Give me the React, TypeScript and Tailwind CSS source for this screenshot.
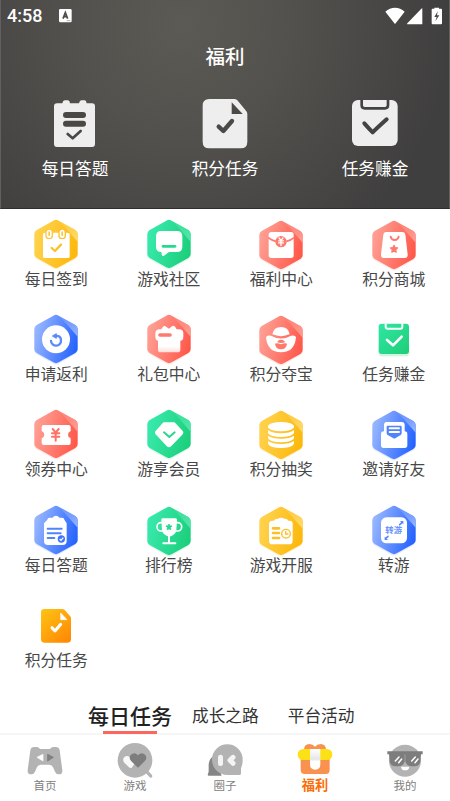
import React from "react";

type Tone = "yellow" | "green" | "red" | "blue";

interface Entry {
  label: string;
  icon: React.ReactElement;
}

const tones: Record<Tone, { from: string; to: string; facet: string }> = {
  yellow: { from: "#ffd350", to: "#fcb80c", facet: "#ffdc72" },
  green: { from: "#3aeaae", to: "#1ccf7b", facet: "#57e9ae" },
  red: { from: "#ffa196", to: "#ff584a", facet: "#ffa299" },
  blue: { from: "#9ab8ff", to: "#2563ff", facet: "#9ab8ff" },
};

const HEX =
  "M64 5Q72 0 80 5L130 33Q137 37 137 45V106Q137 113 130 117L80 145Q72 150 64 145L14 117Q7 113 7 106V45Q7 37 14 33Z";

const Hexagon = ({
  tone,
  low = false,
  children,
}: {
  tone: Tone;
  low?: boolean;
  children: React.ReactNode;
}) => {
  const { from, to, facet } = tones[tone];
  return (
    <svg viewBox="0 0 144 156" className="h-[52px] w-12" fill="none">
      <defs>
        <linearGradient id={`hex-${tone}`} x1="0" y1="0.3" x2="1" y2="0.6">
          <stop offset="0" stopColor={from} />
          <stop offset="1" stopColor={to} />
        </linearGradient>
        <linearGradient id={`facet-${tone}`} x1="0" y1="0" x2="1" y2="1">
          <stop offset="0" stopColor={facet} stopOpacity="0.2" />
          <stop offset="1" stopColor={facet} />
        </linearGradient>
      </defs>
      <g transform={low ? "translate(0 3)" : undefined}>
        <path d={HEX} fill={to} opacity="0.12" transform="translate(0 4)" />
        <path d={HEX} fill={`url(#hex-${tone})`} />
        <path
          d="M83 7L130 33Q137 37 137 45V68Z"
          fill={`url(#facet-${tone})`}
        />
      </g>
      {children}
    </svg>
  );
};

const Yen = ({ x, y, s }: { x: number; y: number; s: number }) => (
  <path
    transform={`translate(${x} ${y}) scale(${s})`}
    d="M-9 -17L0 -6L9 -17M0 -6V18M-11 -4H11M-11 6H11"
    strokeWidth="6"
    strokeLinecap="round"
    strokeLinejoin="round"
  />
);

const Star = ({ x, y, s, fill }: { x: number; y: number; s: number; fill: string }) => (
  <path
    transform={`translate(${x} ${y}) scale(${s})`}
    d="M0 -10L3 -4L10 -3L5 2L6 9L0 6L-6 9L-5 2L-10 -3L-3 -4Z"
    fill={fill}
    stroke={fill}
    strokeWidth="3"
    strokeLinejoin="round"
  />
);

const entries: Entry[] = [
  {
    label: "每日签到",
    icon: (
      <Hexagon tone="yellow">
        <path
          d="M38 41H106Q113 41 113 46V113Q113 117 109 117H37Q33 117 33 113V46Q33 41 38 41Z"
          fill="#fff"
        />
        <rect x="40" y="30" width="23" height="30" rx="10" fill="#fdc63a" />
        <rect x="79" y="30" width="23" height="30" rx="10" fill="#fcc02a" />
        <rect x="44" y="32" width="15" height="25" rx="7.5" fill="#fff" />
        <rect x="83" y="32" width="15" height="25" rx="7.5" fill="#fff" />
        <path
          d="M51.500 39V49M90.500 39V49"
          stroke="#fdc63a"
          strokeWidth="5"
          strokeLinecap="round"
        />
        <path
          d="M59 87L69 96L87 77"
          stroke="#fcc02a"
          strokeWidth="7"
          strokeLinecap="round"
          strokeLinejoin="round"
        />
      </Hexagon>
    ),
  },
  {
    label: "游戏社区",
    icon: (
      <Hexagon tone="green">
        <path
          d="M48 36H96Q112 36 112 52V84Q112 99 96 99H72L57 110Q51 113 50 106L49 99Q33 99 33 84V52Q33 36 48 36Z"
          fill="#fff"
        />
        <path d="M54 82H90" stroke="#26d98e" strokeWidth="8" strokeLinecap="round" />
      </Hexagon>
    ),
  },
  {
    label: "福利中心",
    icon: (
      <Hexagon tone="red" low>
        <rect x="35" y="39" width="75" height="78" rx="8" fill="#fff" />
        <path d="M34 56Q44 65 57 67M111 56Q101 65 88 67" stroke="#ff7a6e" strokeWidth="5" />
        <circle cx="72" cy="68" r="17" fill="#ff7a6e" />
        <g stroke="#fff">
          <Yen x={72} y={68} s={0.65} />
        </g>
      </Hexagon>
    ),
  },
  {
    label: "积分商城",
    icon: (
      <Hexagon tone="red" low>
        <path
          d="M49 39H97Q105 39 106 47L113 106Q114 117 103 117H43Q32 117 33 106L40 47Q41 39 49 39Z"
          fill="#fff"
        />
        <path
          d="M62 53Q64 63 74 63Q84 63 86 53"
          stroke="#ff7a6e"
          strokeWidth="6"
          strokeLinecap="round"
        />
        <Star x={72} y={90} s={1.1} fill="#ff7a6e" />
      </Hexagon>
    ),
  },
  {
    label: "申请返利",
    icon: (
      <Hexagon tone="blue">
        <circle cx="72" cy="76" r="42" fill="#fff" />
        <path
          d="M70 66Q87 64 87 79A15 15 0 0 1 57 81"
          stroke="#5b8bfb"
          strokeWidth="7"
          strokeLinecap="round"
        />
        <path
          d="M61 66L73 59V73Z"
          fill="#5b8bfb"
          stroke="#5b8bfb"
          strokeWidth="3"
          strokeLinejoin="round"
        />
      </Hexagon>
    ),
  },
  {
    label: "礼包中心",
    icon: (
      <Hexagon tone="red">
        <defs>
          <linearGradient id="gift-body" x1="0" y1="0" x2="0" y2="1">
            <stop offset="0.6" stopColor="#fff" />
            <stop offset="1" stopColor="#ffdcd8" />
          </linearGradient>
        </defs>
        <path d="M39 70H106V107Q106 115 98 115H47Q39 115 39 107Z" fill="url(#gift-body)" />
        <path
          d="M45 46H49L54 38Q57 34 61 37L72 44L81 37Q87 33 90 38L95 46H102Q115 46 115 58V68Q115 80 106 80H39Q31 78 31 68V58Q31 46 45 46Z"
          fill="#fff"
        />
        <path d="M45 63H75" stroke="#ff7a6e" strokeWidth="11" strokeLinecap="round" />
      </Hexagon>
    ),
  },
  {
    label: "积分夺宝",
    icon: (
      <Hexagon tone="red" low>
        <path d="M46 61Q50 39 72 39Q94 39 98 61Q72 72 46 61Z" fill="#fff" />
        <path
          d="M27 70Q29 62 42 65Q72 82 102 65Q115 62 117 70Q113 115 72 115Q31 115 27 70Z"
          fill="#fff"
        />
        <path d="M61 85Q62 77 72 77Q82 77 84 85Q72 89 61 85Z" fill="#ff7a6e" />
        <path d="M54 89Q60 86 72 91Q84 86 90 89Q88 106 72 106Q56 106 54 89Z" fill="#ff7a6e" />
      </Hexagon>
    ),
  },
  {
    label: "任务赚金",
    icon: (
      <svg viewBox="0 0 144 156" className="h-[52px] w-12" fill="none">
        <defs>
          <linearGradient id="clip-green" x1="0" y1="0" x2="1" y2="1">
            <stop offset="0" stopColor="#2fe7a4" />
            <stop offset="1" stopColor="#1fcd76" />
          </linearGradient>
        </defs>
        <rect x="27" y="92" width="90" height="34" rx="10" fill="#1fcd76" opacity="0.15" />
        <rect x="24" y="94" width="96" height="36" rx="12" fill="#1fcd76" opacity="0.07" />
        <rect x="26" y="29" width="91" height="91" rx="9" fill="url(#clip-green)" />
        <path d="M47 28V38Q47 44 53 44H91Q97 44 97 38V28" stroke="#fff" strokeWidth="6" />
        <path
          d="M51 78L69 94L95 68"
          stroke="#fff"
          strokeWidth="8"
          strokeLinecap="round"
          strokeLinejoin="round"
        />
      </svg>
    ),
  },
  {
    label: "领券中心",
    icon: (
      <Hexagon tone="red">
        <path
          d="M35 48H110Q116 48 116 54V66Q108 69 108 77Q108 85 116 88V102Q116 108 110 108H35Q29 108 29 102V88Q37 85 37 77Q37 69 29 66V54Q29 48 35 48Z"
          fill="#fff"
        />
        <g stroke="#ff7166">
          <Yen x={71} y={77} s={1} />
        </g>
      </Hexagon>
    ),
  },
  {
    label: "游享会员",
    icon: (
      <Hexagon tone="green">
        <path
          d="M56 43H88L111 68Q113 71 111 74L77 109Q72 114 67 109L34 74Q32 71 34 68Z"
          fill="#fff"
          stroke="#fff"
          strokeWidth="6"
          strokeLinejoin="round"
        />
        <path
          d="M57 70L73 84L89 70"
          stroke="#26d98e"
          strokeWidth="6"
          strokeLinecap="round"
          strokeLinejoin="round"
        />
      </Hexagon>
    ),
  },
  {
    label: "积分抽奖",
    icon: (
      <Hexagon tone="yellow" low>
        <g fill="#fff">
          <ellipse cx="72" cy="53" rx="39" ry="14" />
          <path d="M33 63Q46 73 72 73Q98 73 111 63V72Q104 84 72 84Q40 84 33 72Z" />
          <path d="M33 80Q46 89 72 89Q98 89 111 80V88Q104 100 72 100Q40 100 33 88Z" />
          <path d="M33 96Q46 105 72 105Q98 105 111 96V104Q104 117 72 117Q40 117 33 104Z" />
        </g>
      </Hexagon>
    ),
  },
  {
    label: "邀请好友",
    icon: (
      <Hexagon tone="blue" low>
        <path
          d="M50 39H95Q104 39 104 48V67Q112 67 112 75V109Q112 117 104 117H41Q33 117 33 109V75Q33 67 42 67V48Q42 39 50 39Z"
          fill="#fff"
        />
        <path
          d="M53 50H92Q95 50 95 53V73Q95 76 92 78L77 87Q73 90 69 87L53 78Q50 76 50 73V53Q50 50 53 50Z"
          fill="#5183fb"
        />
        <path d="M59 58H87M59 69H87" stroke="#fff" strokeWidth="6" strokeLinecap="round" />
      </Hexagon>
    ),
  },
  {
    label: "每日答题",
    icon: (
      <Hexagon tone="blue">
        <path
          d="M46 44Q46 38 53 38H62Q65 32 72 32Q79 32 82 38H90Q97 38 97 44L104 55V108Q104 120 92 120H48Q36 120 36 108V55Z"
          fill="#fff"
        />
        <path
          d="M47 71H89M47 85H86M47 99H67"
          stroke="#5183fb"
          strokeWidth="6"
          strokeLinecap="round"
        />
        <circle cx="88" cy="102" r="11" fill="#4076fc" />
        <path d="M83 102L87 106L94 98" stroke="#fff" strokeWidth="3.500" />
      </Hexagon>
    ),
  },
  {
    label: "排行榜",
    icon: (
      <Hexagon tone="green" low>
        <rect x="36" y="53" width="74" height="25" rx="12" stroke="#fff" strokeWidth="5" />
        <path
          d="M53 40H92Q97 40 96 46L94 76Q91 91 73 95Q54 91 51 76L49 46Q48 40 53 40Z"
          fill="#fff"
        />
        <path d="M72 90V114M55 115H91" stroke="#fff" strokeWidth="6" strokeLinecap="round" />
        <Star x={72} y={66} s={0.9} fill="#26d98e" />
      </Hexagon>
    ),
  },
  {
    label: "游戏开服",
    icon: (
      <Hexagon tone="yellow" low>
        <path
          d="M47 47H51Q54 41 60 41H63Q72 35 82 41H85Q91 41 94 47H98Q107 47 107 57V107Q107 118 97 118H46Q36 118 36 107V57Q36 47 47 47Z"
          fill="#fff"
        />
        <path
          d="M48 70H66M48 84H66M48 99H66"
          stroke="#fdbf27"
          strokeWidth="8"
          strokeLinecap="round"
        />
        <circle cx="87" cy="86" r="13" stroke="#fdbf27" strokeWidth="4" />
        <path d="M86 78V87H94" stroke="#fdbf27" strokeWidth="4" />
      </Hexagon>
    ),
  },
  {
    label: "转游",
    icon: (
      <Hexagon tone="blue">
        <rect x="33" y="37" width="78" height="78" rx="16" fill="#fff" />
        <text
          x="71"
          y="85"
          textAnchor="middle"
          fontSize="25"
          fontWeight="700"
          fill="#6c95fb"
          className="font-['Noto_Sans_CJK_SC',sans-serif]"
        >
          转游
        </text>
        <path
          d="M89 59L96 53M54 94L47 100"
          stroke="#5183fb"
          strokeWidth="4.500"
          strokeLinecap="round"
        />
        <path d="M90 48H100V58ZM54 105H44V95Z" fill="#5183fb" />
      </Hexagon>
    ),
  },
  {
    label: "积分任务",
    icon: (
      <svg viewBox="0 0 144 156" className="h-[52px] w-12" fill="none">
        <defs>
          <linearGradient id="doc-orange" x1="0" y1="0" x2="0.8" y2="1">
            <stop offset="0" stopColor="#ffc415" />
            <stop offset="1" stopColor="#ff8a05" />
          </linearGradient>
        </defs>
        <path
          d="M37 27H91Q95 27 98 30L114 48Q117 51 117 55V118Q117 128 107 128H37Q27 128 27 118V37Q27 27 37 27Z"
          fill="url(#doc-orange)"
        />
        <path
          d="M86 39V59H105Z"
          fill="#fff"
          stroke="#fff"
          strokeWidth="2"
          strokeLinejoin="round"
        />
        <path
          d="M60 83L69 93L86 73"
          stroke="#fff"
          strokeWidth="9"
          strokeLinecap="round"
          strokeLinejoin="round"
        />
      </svg>
    ),
  },
];

const shortcuts: Entry[] = [
  {
    label: "每日答题",
    icon: (
      <svg viewBox="0 0 150 156" className="h-[52px] w-[50px]" fill="none">
        <path
          d="M21 16H37Q39 7 44 7H54Q59 7 60 16H87Q89 7 94 7H104Q109 7 110 16H126Q135 16 135 25V138Q135 147 126 147H21Q12 147 12 138V25Q12 16 21 16Z"
          fill="#eee"
        />
        <path d="M48 51H99M48 77H99" stroke="#494845" strokeWidth="18" strokeLinecap="round" />
        <path
          d="M53 108L68 121L92 99"
          stroke="#494845"
          strokeWidth="8"
          strokeLinecap="round"
          strokeLinejoin="round"
        />
      </svg>
    ),
  },
  {
    label: "积分任务",
    icon: (
      <svg viewBox="0 0 150 156" className="h-[52px] w-[50px]" fill="none">
        <path
          d="M28 3H102Q108 3 112 7L138 38Q142 42 142 48V131Q142 151 122 151H28Q8 151 8 131V23Q8 3 28 3Z"
          fill="#eee"
        />
        <path d="M95 13V48H128Z" fill="#4b4a46" />
        <path
          d="M56 86L70 99L96 69"
          stroke="#4b4a46"
          strokeWidth="13"
          strokeLinecap="round"
          strokeLinejoin="round"
        />
      </svg>
    ),
  },
  {
    label: "任务赚金",
    icon: (
      <svg viewBox="0 0 150 156" className="h-[52px] w-[50px]" fill="none">
        <rect x="6" y="6" width="137" height="138" rx="18" fill="#eee" />
        <path d="M35 4V22Q35 31 44 31H105Q114 31 114 22V4" stroke="#434341" strokeWidth="8" />
        <path
          d="M43 76Q58 93 68 103Q78 93 110 64"
          stroke="#434341"
          strokeWidth="12"
          strokeLinecap="round"
          strokeLinejoin="round"
        />
      </svg>
    ),
  },
];

const navItems: Entry[] = [
  {
    label: "首页",
    icon: (
      <svg viewBox="0 0 120 120" className="size-10">
        <path
          d="M16 28Q18 18 28 18H34Q42 18 45 24H75Q78 18 86 18H92Q102 18 104 28L112 88Q113 100 102 100Q93 100 90 92L85 80Q81 71 73 71H47Q39 71 35 80L30 92Q27 100 18 100Q7 100 8 88Z"
          fill="#b3b3b3"
        />
        <path
          d="M54 40V60L36 49Z"
          fill="#fff"
          stroke="#fff"
          strokeWidth="2"
          strokeLinejoin="round"
        />
        <path
          d="M68 40V60L85 49Z"
          fill="#828282"
          stroke="#828282"
          strokeWidth="3"
          strokeLinejoin="round"
        />
      </svg>
    ),
  },
  {
    label: "游戏",
    icon: (
      <svg viewBox="0 0 120 120" className="size-10">
        <circle cx="60" cy="58" r="52" fill="#b3b3b3" />
        <path d="M92 88L107 105" stroke="#b3b3b3" strokeWidth="10" strokeLinecap="round" />
        <path
          d="M42 79L28 65Q21 56 28 48Q35 42 44 48Q50 42 58 47L62 64L50 80Q46 83 42 79Z"
          fill="#f8f8f8"
        />
        <path
          d="M69 80L49 61Q40 51 47 42Q58 31 69 43Q80 31 91 42Q98 51 89 61Z"
          fill="#7d7d7d"
        />
      </svg>
    ),
  },
  {
    label: "圈子",
    icon: (
      <svg viewBox="0 0 120 120" className="size-10">
        <path d="M28 44Q10 52 11 76V92L8 101Q8 104 12 104H50Z" fill="#858585" />
        <path
          d="M67 10A46 46 0 0 1 113 56Q113 72 108 82V96Q109 102 102 102H67A46 46 0 0 1 67 10Z"
          fill="#b3b3b3"
        />
        <rect x="39" y="41" width="15" height="34" rx="7.500" fill="#f4f4f4" />
        <path
          d="M84 49L75 58L84 67"
          fill="none"
          stroke="#f4f4f4"
          strokeWidth="15"
          strokeLinecap="round"
          strokeLinejoin="round"
        />
      </svg>
    ),
  },
  {
    label: "福利",
    icon: (
      <svg viewBox="0 0 120 120" className="size-10">
        <defs>
          <linearGradient id="ribbon" x1="0" y1="0" x2="0" y2="1">
            <stop offset="0" stopColor="#fff" />
            <stop offset="0.5" stopColor="#e6e6e6" />
            <stop offset="0.6" stopColor="#fff" />
          </linearGradient>
        </defs>
        <path
          d="M27 28Q27 9 43 9Q54 9 60 17Q66 9 77 9Q93 9 93 28V40H27Z"
          fill="#f9914f"
        />
        <path d="M17 50H104V87Q104 99 92 99H29Q17 99 17 87Z" fill="#f9914f" />
        <rect x="8" y="24" width="104" height="33" rx="16.500" fill="#fbe116" />
        <path d="M45 24H76V70Q76 86 60.500 86Q45 86 45 70Z" fill="url(#ribbon)" />
      </svg>
    ),
  },
  {
    label: "我的",
    icon: (
      <svg viewBox="0 0 120 120" className="size-10">
        <circle cx="60" cy="59" r="48" fill="#b3b3b3" />
        <path
          d="M7 31H113V40H108L106 60Q104 76 88 76H80Q66 76 62 63H58Q54 76 40 76H32Q16 76 14 60L12 40H7Z"
          fill="#7d7d7d"
        />
        <path d="M60 40V63" stroke="#b3b3b3" strokeWidth="2" />
        <path
          d="M31 60L42 48M41 65L50 54M80 60L91 48M90 65L99 54"
          stroke="#fff"
          strokeWidth="4.500"
          strokeLinecap="round"
        />
        <path d="M48 77H73Q72 88 60.500 88Q49 88 48 77Z" fill="#fff" />
      </svg>
    ),
  },
];

const tabs = ["每日任务", "成长之路", "平台活动"];

const StatusBar = () => (
  <div className="flex h-[31px] items-center px-[6px] text-white">
    <span className="font-[Roboto,sans-serif] text-[18px] leading-none font-medium">
      4:58
    </span>
    <svg viewBox="0 0 39 42" className="ml-[17px] h-3.5 w-[13px]">
      <rect width="38" height="40" rx="4" fill="#fff" />
      <path
        d="M12 29L19 11L26 29M14 23H24"
        fill="none"
        stroke="#4d4c49"
        strokeWidth="5"
      />
      <path d="M23 35H34" stroke="#8a8986" strokeWidth="2" />
    </svg>
    <svg viewBox="0 0 174 54" className="ml-auto h-[18px] w-[58px]" fill="#fff">
      <path d="M1 14Q14 2 30 2Q46 2 59 14L32 49Q30 52 28 49Z" />
      <path d="M112 5V50Q112 52 110 52H67Q65 52 67 49L109 5Q112 3 112 5Z" />
      <path d="M142 5H148V2H162V5H168Q171 5 171 8V49Q171 52 168 52H143Q140 52 140 49V8Q140 5 142 5Z" />
      <path d="M158 13L148 30H155L151 43L163 25H156Z" fill="#4a4a48" />
    </svg>
  </div>
);

const Header = () => (
  <header className="h-[209px] shrink-0 border-x border-b border-x-[#62605e] border-b-[#2f2e2d] bg-[radial-gradient(circle_at_180px_25px,#5b5a54_0px,#52514d_110px,#403f3f_270px)] text-white">
    <StatusBar />
    <h1 className="mt-[11px] text-center text-[19.500px] leading-7 font-medium">
      福利
    </h1>
    <div className="-mx-px mt-[28px] grid grid-cols-3">
      {shortcuts.map((item) => (
        <div key={item.label} className="flex flex-col items-center">
          {item.icon}
          <span className="mt-[6px] text-[16.700px] leading-6">{item.label}</span>
        </div>
      ))}
    </div>
  </header>
);

export default function App() {
  return (
    <div className="flex h-[801px] w-[450px] flex-col overflow-hidden bg-white font-['Noto_Sans_CJK_SC',sans-serif]">
      <Header />

      <section className="grid shrink-0 grid-cols-4 pt-[10px]">
        {entries.map((item) => (
          <div key={item.label} className="flex h-[95.200px] flex-col items-center">
            {item.icon}
            <span className="-mt-[4px] text-[15.800px] leading-6 text-[#484848]">
              {item.label}
            </span>
          </div>
        ))}
      </section>

      <div className="mt-[3px] flex h-[35px] shrink-0 items-center pl-[88px]">
        {tabs.map((tab, index) =>
          index === 0 ? (
            <div
              key={tab}
              className="relative mr-5 text-[21px] leading-[30px] font-medium text-[#222]"
            >
              {tab}
              <span className="absolute top-[31px] left-[15px] z-10 h-[2.500px] w-[54px] bg-[#fb665e]" />
            </div>
          ) : (
            <span key={tab} className="mr-[29px] text-[16.700px] leading-6 text-[#333]">
              {tab}
            </span>
          )
        )}
      </div>

      <nav className="mt-auto grid h-[68px] shrink-0 grid-cols-5 border-t-2 border-[#f6f6f6] bg-white pt-[6px]">
        {navItems.map((item) => (
          <div key={item.label} className="flex flex-col items-center">
            {item.icon}
            {item.label === "福利" ? (
              <span className="-mt-[4px] text-[13.200px] leading-4 font-bold text-[#fb6d05]">
                {item.label}
              </span>
            ) : (
              <span className="-mt-[4px] text-[11.500px] leading-4 text-[#808080]">
                {item.label}
              </span>
            )}
          </div>
        ))}
      </nav>
    </div>
  );
}
